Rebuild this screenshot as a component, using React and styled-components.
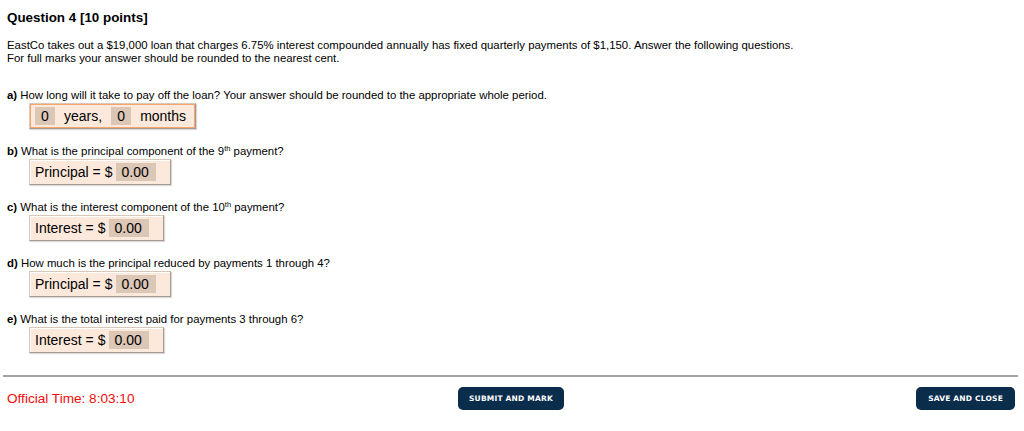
import React from "react";
import styled, { createGlobalStyle } from "styled-components";

const Global = createGlobalStyle`
  html, body {
    margin: 0;
    padding: 0;
    background: #ffffff;
    font-family: "Liberation Sans", Arial, sans-serif;
    color: #000;
  }
`

const Page = styled.main`
  width: 1024px;
  height: 431px;
  box-sizing: border-box;
  padding: 10px 6px 0 7px;
  display: flex;
  flex-direction: column;
`

const Title = styled.h1`
  margin: 0;
  font-size: 13.4px;
  font-weight: bold;
  line-height: 16px;
`

const Intro = styled.p`
  margin: 13px 0 0;
  font-size: 11.4px;
  line-height: 13px;
`

const Parts = styled.div`
  display: flex;
  flex-direction: column;
  gap: 16px;
  margin-top: 24px;
`

const Part = styled.section`
  display: flex;
  flex-direction: column;
  align-items: flex-start;
  gap: 1px;
`

const Ask = styled.div`
  font-size: 11.4px;
  line-height: 13px;
  b { font-weight: bold; }
  sup { font-size: 7.5px; line-height: 0; vertical-align: 4px; }
`

const AnswerBox = styled.div`
  margin-left: 22px;
  display: flex;
  align-items: center;
  gap: 4px;
  padding: 3px 14px 3px 5px;
  height: 18px;
  background: #fde9dc;
  border: 1px solid #d9c8b9;
  border-right-color: #a89a8e;
  border-bottom-color: #a89a8e;
  box-shadow: ${p => p.$focus
    ? "inset 0 0 0 1px #f6a66a, 1px 1px 1px rgba(0,0,0,0.15)"
    : "inset 1px 1px 0 #fff, 1px 1px 1px rgba(0,0,0,0.15)"};
  font-size: 14px;
  padding-right: ${p => p.$focus ? "4px" : "14px"};
`

const Field = styled.span`
  display: inline-flex;
  align-items: center;
  justify-content: ${p => p.$center ? "center" : "flex-start"};
  height: 18px;
  width: ${p => p.$w}px;
  padding-left: ${p => p.$center ? 0 : 5}px;
  box-sizing: border-box;
  background: #dcc6b6;
`

const Unit = styled.span`
  padding: 0 5px;
`

const Footer = styled.footer`
  margin-top: auto;
  margin-bottom: 21px;
  border-top: 2px solid #a3a3a3;
  margin-left: -4px;
  padding: 10px 3px 0 4px;
  display: grid;
  grid-template-columns: 1fr auto 1fr;
  align-items: center;
`

const Clock = styled.div`
  color: #f20c0c;
  font-size: 13.6px;
`

const Button = styled.button`
  justify-self: ${p => p.$end ? "end" : "center"};
  background: #0b2d4c;
  color: #fff;
  border: none;
  border-radius: 5px;
  height: 23px;
  padding: 0 ${p => p.$end ? 12 : 11}px;
  font-family: "DejaVu Sans", "Liberation Sans", sans-serif;
  font-weight: bold;
  font-size: 7.5px;
  letter-spacing: 0.2px;
  cursor: pointer;
`

const MoneyAnswer = ({ label }) => (
  <AnswerBox>
    <span>{label} = $</span>
    <Field $w={40}>0.00</Field>
  </AnswerBox>
)

const App = () => {
  return (
    <Page>
      <Global />
      <Title>Question 4 [10 points]</Title>
      <Intro>
        EastCo takes out a $19,000 loan that charges 6.75% interest compounded annually has fixed quarterly payments of $1,150. Answer the following questions.<br />
        For full marks your answer should be rounded to the nearest cent.
      </Intro>
      <Parts>
        <Part>
          <Ask><b>a)</b> How long will it take to pay off the loan? Your answer should be rounded to the appropriate whole period.</Ask>
          <AnswerBox $focus>
            <Field $w={20} $center>0</Field>
            <Unit>years,</Unit>
            <Field $w={20} $center>0</Field>
            <Unit>months</Unit>
          </AnswerBox>
        </Part>
        <Part>
          <Ask><b>b)</b> What is the principal component of the 9<sup>th</sup> payment?</Ask>
          <MoneyAnswer label="Principal" />
        </Part>
        <Part>
          <Ask><b>c)</b> What is the interest component of the 10<sup>th</sup> payment?</Ask>
          <MoneyAnswer label="Interest" />
        </Part>
        <Part>
          <Ask><b>d)</b> How much is the principal reduced by payments 1 through 4?</Ask>
          <MoneyAnswer label="Principal" />
        </Part>
        <Part>
          <Ask><b>e)</b> What is the total interest paid for payments 3 through 6?</Ask>
          <MoneyAnswer label="Interest" />
        </Part>
      </Parts>
      <Footer>
        <Clock>Official Time: 8:03:10</Clock>
        <Button>SUBMIT AND MARK</Button>
        <Button $end>SAVE AND CLOSE</Button>
      </Footer>
    </Page>
  );
};

export default App;
